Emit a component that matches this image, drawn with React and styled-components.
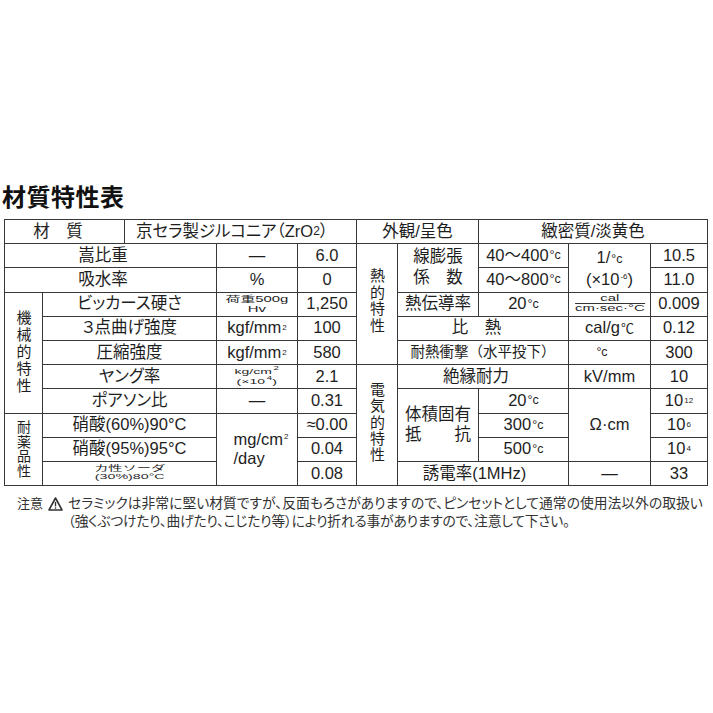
import React from 'react';
import styled, { createGlobalStyle } from 'styled-components';

const GlobalStyle = createGlobalStyle`
  html, body { margin: 0; padding: 0; background: #fff; }
  body {
    font-family: "Liberation Sans", "Noto Sans CJK JP", sans-serif;
    color: #1e1e1e;
  }
`;

const LINE = '1.5px solid #383838';

const Page = styled.div`
  width: 713px;
  height: 713px;
  padding-top: 181px;
  box-sizing: border-box;
  overflow: hidden;
`;

const Title = styled.h1`
  margin: 0 0 8px 2px;
  font-family: "Noto Sans CJK JP", sans-serif;
  font-size: 24px;
  line-height: 30px;
  font-weight: 700;
  letter-spacing: 0.5px;
  color: #111;
`;

const Grid = styled.div`
  display: grid;
  grid-template-columns: 38px 82px 92px 81px 59px 41px 81px 90px 82px 57px;
  grid-template-rows: repeat(11, 24.2px);
  width: max-content;
  margin-left: 4px;
  border-top: ${LINE};
  border-left: ${LINE};
`;

const Cell = styled.div`
  grid-column: ${(p) => p.$c};
  grid-row: ${(p) => p.$r};
  box-sizing: border-box;
  border-right: ${LINE};
  border-bottom: ${LINE};
  display: flex;
  align-items: center;
  justify-content: ${(p) => p.$j || 'center'};
  padding: ${(p) => p.$pad || '0'};
  font-size: ${(p) => p.$fs || 16.5}px;
  line-height: 1.2;
  white-space: nowrap;
  overflow: hidden;
  font-feature-settings: ${(p) => (p.$noPalt ? 'normal' : '"palt"')};
`;

const Vertical = styled.div`
  writing-mode: vertical-rl;
  text-orientation: upright;
  font-family: "Noto Sans CJK JP", sans-serif;
  font-size: ${(p) => p.$fs || 15}px;
  line-height: 1.2;
  letter-spacing: ${(p) => p.$ls || 0}px;
  margin-bottom: ${(p) => p.$lift || 0}px;
  font-feature-settings: normal;
`;

const Tiny = styled.div`
  display: flex;
  flex-direction: column;
  align-items: center;
  font-size: ${(p) => p.$fs || 8.5}px;
  line-height: ${(p) => p.$lh || 10}px;
  transform: scaleX(${(p) => p.$sx || 1.7});
  font-feature-settings: normal;
`;

const Lines = styled.div`
  display: flex;
  flex-direction: column;
  align-items: ${(p) => (p.$left ? 'flex-start' : 'center')};
  line-height: ${(p) => p.$lh}px;
  margin-left: ${(p) => p.$shift || 0}px;
`;

const JustBox = styled.div`
  display: inline-grid;
  grid-auto-rows: ${(p) => p.$lh}px;
  align-items: center;
`;

const JustLine = styled.div`
  display: flex;
  justify-content: space-between;
`;

const Deg = styled.span`
  font-size: ${(p) => p.$fs || 12.5}px;
  margin-left: 1px;
`;

const Sup = styled.sup`
  font-size: ${(p) => p.$fs || 8}px;
  vertical-align: 0.75em;
  line-height: 0;
  margin-left: 1px;
`;

const Sub = styled.span`
  font-size: 12px;
`;

const Fraction = styled.div`
  display: inline-flex;
  flex-direction: column;
  align-items: center;
  font-size: 8.5px;
  line-height: 9.5px;
  transform: scaleX(1.75);
  font-feature-settings: normal;
`;

const Numer = styled.span`
  align-self: stretch;
  text-align: center;
  border-bottom: 1px solid #333;
  line-height: 8.5px;
`;

const Denom = styled.span`
  padding-top: 0.5px;
`;

const Note = styled.div`
  display: flex;
  align-items: flex-start;
  margin: 9px 0 0 17px;
  font-size: 13.8px;
  line-height: 18px;
  color: #333;
  font-feature-settings: "palt";
`;

const NoteLabel = styled.span`
  white-space: nowrap;
  font-feature-settings: normal;
  font-size: 13px;
`;

const WarnIcon = styled.svg`
  flex: none;
  margin: 2px 5px 0 5px;
`;

const NoteBody = styled.div`
  display: flex;
  flex-direction: column;
`;

const NoteLine = styled.div`
  white-space: nowrap;
  letter-spacing: ${(p) => p.$ls || 0}px;
`;

export default function App() {
  return (
    <>
      <GlobalStyle />
      <Page>
        <Title>材質特性表</Title>
        <Grid>
          {/* ---------- left half ---------- */}
          <Cell $c="1 / 3" $r="1" $pad="0 13px 0 0">材　質</Cell>
          <Cell $c="3 / 6" $r="1" $j="flex-start" $pad="0 0 0 11px">
            京セラ製ジルコニア（ZrO<Sub>2</Sub>）
          </Cell>

          <Cell $c="1 / 4" $r="2" $pad="0 15px 0 0">嵩比重</Cell>
          <Cell $c="4" $r="2">—</Cell>
          <Cell $c="5" $r="2">6.0</Cell>

          <Cell $c="1 / 4" $r="3" $pad="0 15px 0 0">吸水率</Cell>
          <Cell $c="4" $r="3">%</Cell>
          <Cell $c="5" $r="3">0</Cell>

          <Cell $c="1" $r="4 / 9">
            <Vertical $fs={15} $ls={2}>機械的特性</Vertical>
          </Cell>
          <Cell $c="2 / 4" $r="4">ビッカース硬さ</Cell>
          <Cell $c="4" $r="4">
            <Tiny $lh={10} $fs={8.5} $sx={1.75}>
              <span>荷重500g</span>
              <span>Hv</span>
            </Tiny>
          </Cell>
          <Cell $c="5" $r="4">1,250</Cell>

          <Cell $c="2 / 4" $r="5">３点曲げ強度</Cell>
          <Cell $c="4" $r="5">kgf/mm<Sup>2</Sup></Cell>
          <Cell $c="5" $r="5">100</Cell>

          <Cell $c="2 / 4" $r="6">圧縮強度</Cell>
          <Cell $c="4" $r="6">kgf/mm<Sup>2</Sup></Cell>
          <Cell $c="5" $r="6">580</Cell>

          <Cell $c="2 / 4" $r="7">ヤング率</Cell>
          <Cell $c="4" $r="7">
            <Tiny $lh={10} $fs={8} $sx={1.75}>
              <span>kg/cm<Sup $fs={5.5}>2</Sup></span>
              <span>(×10<Sup $fs={5.5}>4</Sup>)</span>
            </Tiny>
          </Cell>
          <Cell $c="5" $r="7">2.1</Cell>

          <Cell $c="2 / 4" $r="8">ポアソン比</Cell>
          <Cell $c="4" $r="8">—</Cell>
          <Cell $c="5" $r="8">0.31</Cell>

          <Cell $c="1" $r="9 / 12">
            <Vertical $fs={14} $ls={0.5}>耐薬品性</Vertical>
          </Cell>
          <Cell $c="2 / 4" $r="9">硝酸(60%)90°C</Cell>
          <Cell $c="4" $r="9 / 12">
            <Lines $lh={19} $left $shift={8}>
              <span>mg/cm<Sup>2</Sup></span>
              <span>/day</span>
            </Lines>
          </Cell>
          <Cell $c="5" $r="9">≈0.00</Cell>

          <Cell $c="2 / 4" $r="10">硝酸(95%)95°C</Cell>
          <Cell $c="5" $r="10">0.04</Cell>

          <Cell $c="2 / 4" $r="11">
            <Tiny $lh={8.5} $fs={7.5} $sx={1.9}>
              <span>カ性ソーダ</span>
              <span>(30%)80°C</span>
            </Tiny>
          </Cell>
          <Cell $c="5" $r="11">0.08</Cell>

          {/* ---------- right half ---------- */}
          <Cell $c="6 / 8" $r="1">外観/呈色</Cell>
          <Cell $c="8 / 11" $r="1">緻密質/淡黄色</Cell>

          <Cell $c="6" $r="2 / 7">
            <Vertical $fs={15} $ls={1.5} $lift={6}>熱的特性</Vertical>
          </Cell>
          <Cell $c="7" $r="2 / 4">
            <JustBox $lh={21}>
              <JustLine><span>線膨張</span></JustLine>
              <JustLine><span>係</span><span>数</span></JustLine>
            </JustBox>
          </Cell>
          <Cell $c="8" $r="2">40～400<Deg>°c</Deg></Cell>
          <Cell $c="9" $r="2 / 4">
            <Lines $lh={20}>
              <span>1/<Deg>°c</Deg></span>
              <span>(×10<Sup>-6</Sup>)</span>
            </Lines>
          </Cell>
          <Cell $c="10" $r="2">10.5</Cell>

          <Cell $c="8" $r="3">40～800<Deg>°c</Deg></Cell>
          <Cell $c="10" $r="3">11.0</Cell>

          <Cell $c="7" $r="4">熱伝導率</Cell>
          <Cell $c="8" $r="4">20<Deg>°c</Deg></Cell>
          <Cell $c="9" $r="4">
            <Fraction>
              <Numer>cal</Numer>
              <Denom>cm·sec·°C</Denom>
            </Fraction>
          </Cell>
          <Cell $c="10" $r="4">0.009</Cell>

          <Cell $c="7 / 9" $r="5" $pad="0 13px 0 0">比　熱</Cell>
          <Cell $c="9" $r="5">cal/g <Deg $fs={13}>℃</Deg></Cell>
          <Cell $c="10" $r="5">0.12</Cell>

          <Cell $c="7 / 9" $r="6" $fs={14.5} $noPalt>耐熱衝撃（水平投下）</Cell>
          <Cell $c="9" $r="6" $pad="0 16px 0 0"><Deg>°c</Deg></Cell>
          <Cell $c="10" $r="6">300</Cell>

          <Cell $c="6" $r="7 / 12">
            <Vertical $fs={15} $ls={1.25} $lift={5}>電気的特性</Vertical>
          </Cell>
          <Cell $c="7 / 9" $r="7" $pad="0 14px 0 0">絶縁耐力</Cell>
          <Cell $c="9" $r="7">kV/mm</Cell>
          <Cell $c="10" $r="7">10</Cell>

          <Cell $c="7" $r="8 / 11">
            <JustBox $lh={20}>
              <JustLine><span>体積固有</span></JustLine>
              <JustLine><span>抵</span><span>抗</span></JustLine>
            </JustBox>
          </Cell>
          <Cell $c="8" $r="8">20<Deg>°c</Deg></Cell>
          <Cell $c="9" $r="8 / 11">Ω·cm</Cell>
          <Cell $c="10" $r="8">10<Sup>12</Sup></Cell>

          <Cell $c="8" $r="9">300<Deg>°c</Deg></Cell>
          <Cell $c="10" $r="9">10<Sup>6</Sup></Cell>

          <Cell $c="8" $r="10">500<Deg>°c</Deg></Cell>
          <Cell $c="10" $r="10">10<Sup>4</Sup></Cell>

          <Cell $c="7 / 9" $r="11" $pad="0 17px 0 0">誘電率(1MHz)</Cell>
          <Cell $c="9" $r="11">—</Cell>
          <Cell $c="10" $r="11">33</Cell>
        </Grid>

        <Note>
          <NoteLabel>注意</NoteLabel>
          <WarnIcon width="15" height="14" viewBox="0 0 15 14" aria-hidden="true">
            <path d="M7.5 1 L14 13 L1 13 Z" fill="none" stroke="#333" strokeWidth="1.6" strokeLinejoin="round" />
            <rect x="6.8" y="4.8" width="1.4" height="4.6" fill="#333" />
            <rect x="6.8" y="10.3" width="1.4" height="1.4" fill="#333" />
          </WarnIcon>
          <NoteBody>
            <NoteLine>セラミックは非常に堅い材質ですが、反面もろさがありますので、ピンセットとして通常の使用法以外の取扱い</NoteLine>
            <NoteLine $ls={-0.25}>（強くぶつけたり、曲げたり、こじたり等）により折れる事がありますので、注意して下さい。</NoteLine>
          </NoteBody>
        </Note>
      </Page>
    </>
  );
}
